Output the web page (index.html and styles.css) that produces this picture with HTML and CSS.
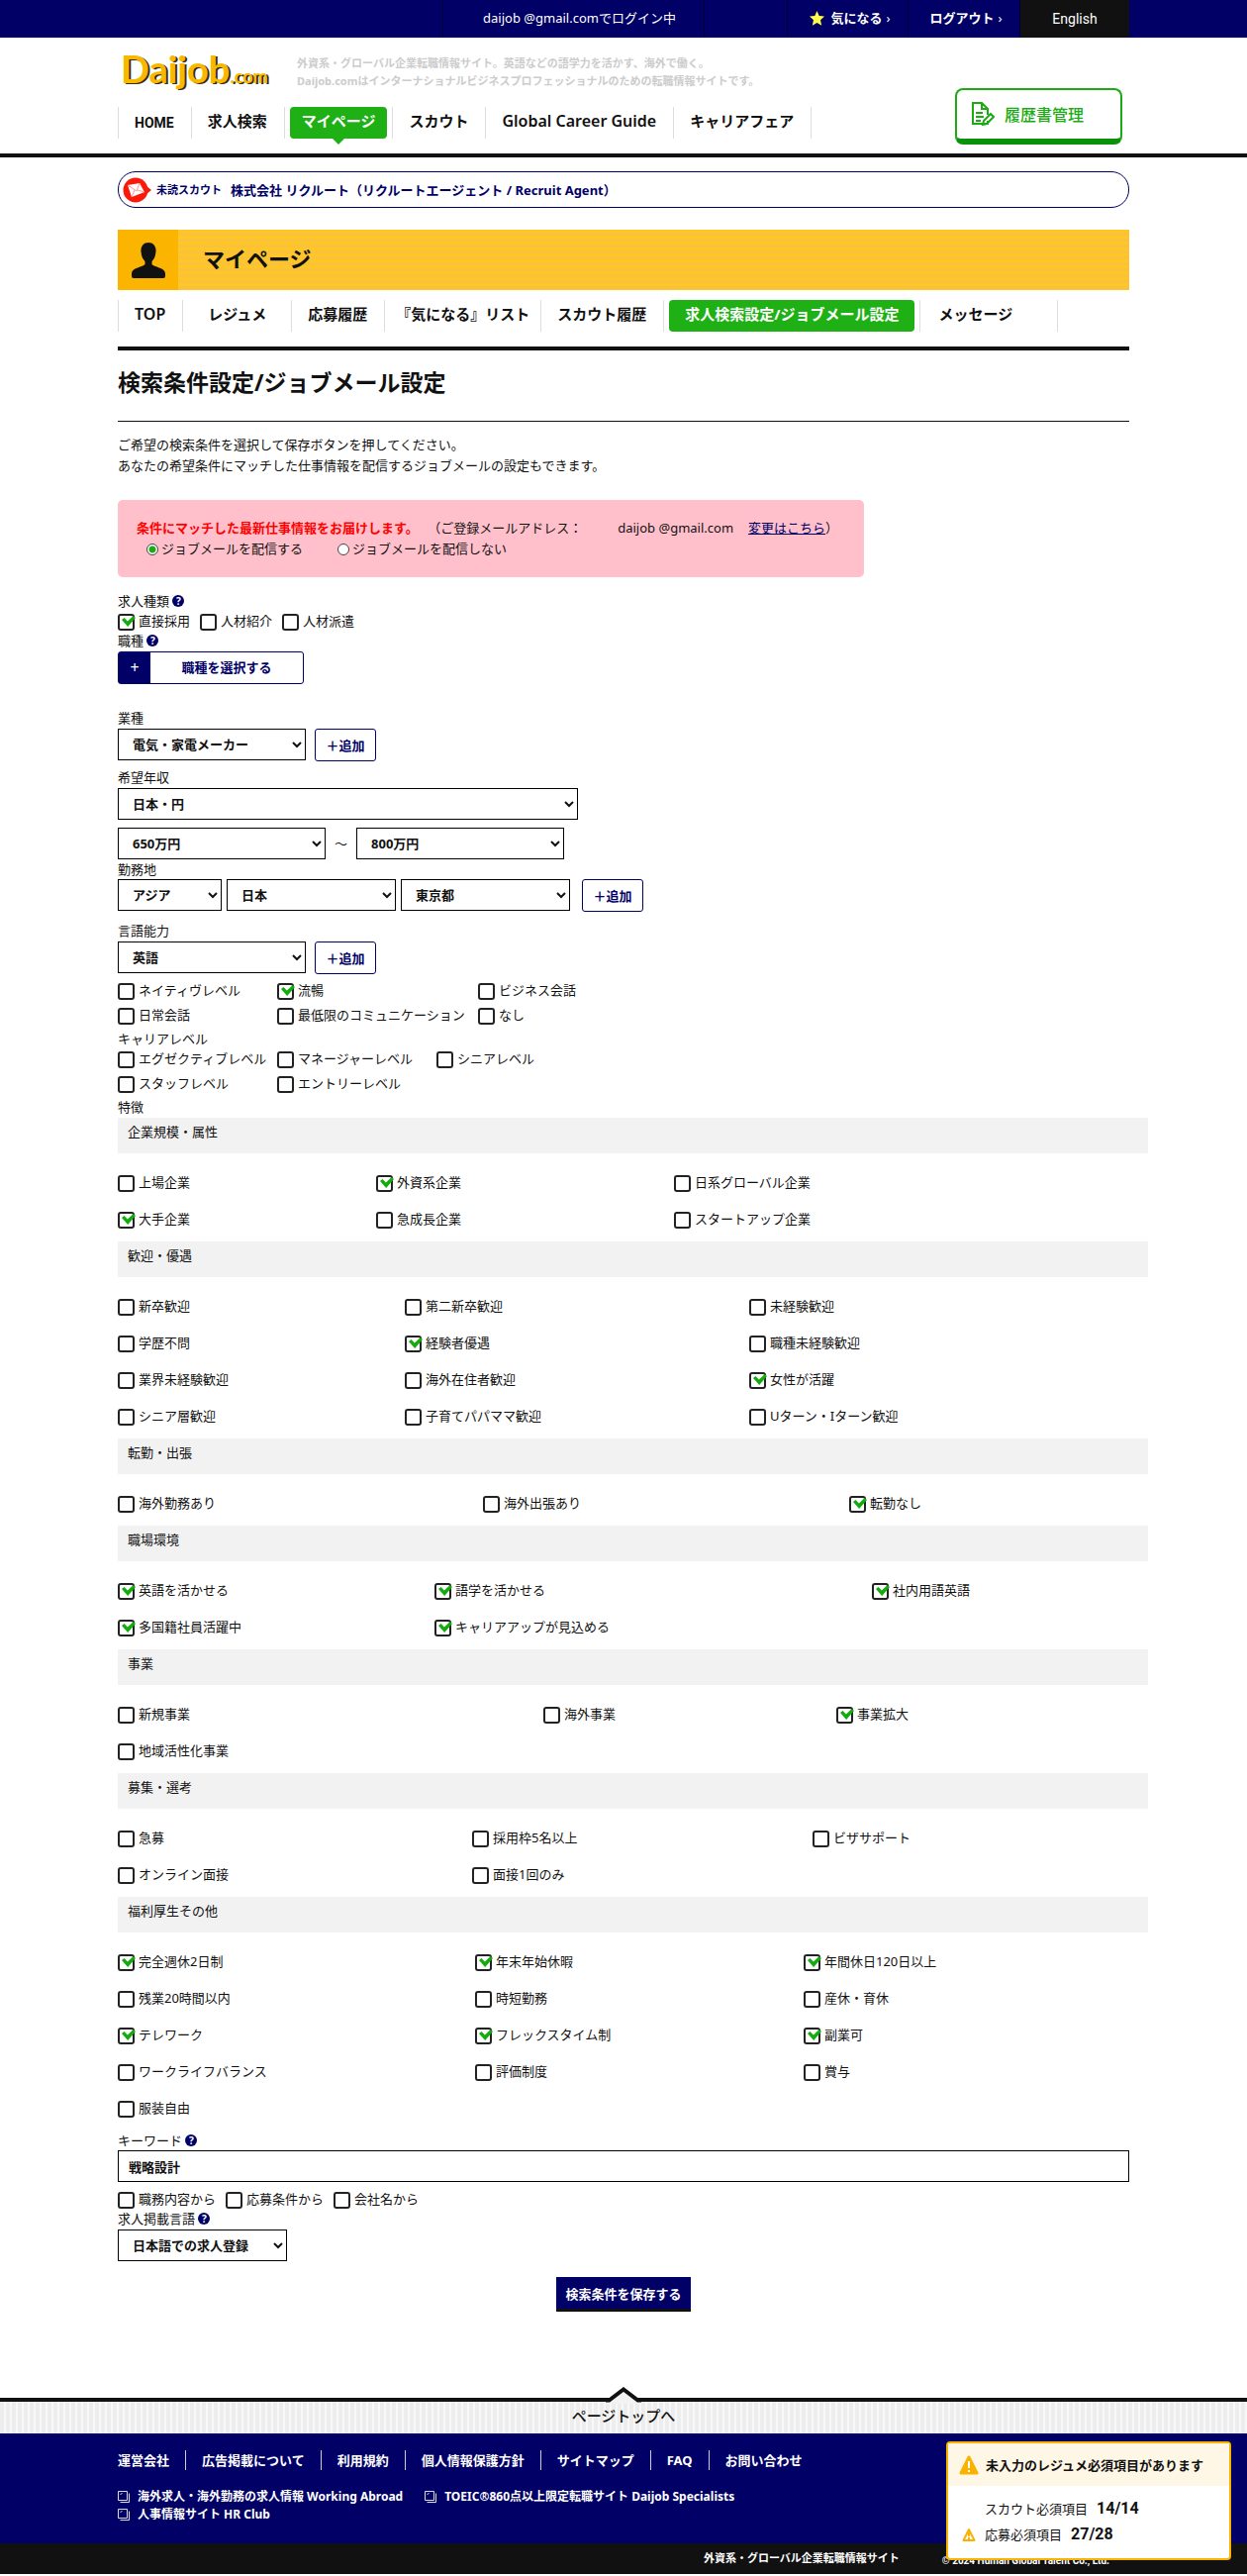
FILE: index.html
```html
<!DOCTYPE html>
<html lang="ja">
  <head>
    <meta charset="UTF-8" />
    <meta name="viewport" content="width=device-width, initial-scale=1.0" />
    <title>検索条件設定/ジョブメール設定 - Daijob.com</title>
    <link rel="stylesheet" href="styles.css">
  </head>
  <body>
    <div class="topbar">
      <ul class="container topbar-list">
        <li class="login">daijob @gmail.comでログイン中</li>
        <li class="blank"></li>
        <li class="fav">
          <a href="#">
            <svg width="15" height="15" viewBox="0 0 15 15"><path fill="#ffff4d" d="M7.5 0l2.2 5 5.3.6-4 3.6 1.2 5.5-4.7-2.8-4.7 2.8L4 9.200 0 5.600 5.300 5z" /></svg>
            気になる<span class="arrow">›</span>
          </a>
        </li>
        <li class="logout"><a href="#">ログアウト<span class="arrow">›</span></a></li>
        <li class="lang"><a href="#">English</a></li>
      </ul>
    </div>

    <header class="header">
      <div class="container header-inner">
        <div>
          <div class="brand">
            <a href="#" class="logo">Daijob<small>.com</small></a>
            <p class="tagline">外資系・グローバル企業転職情報サイト。英語などの語学力を活かす、海外で働く。<br>Daijob.comはインターナショナルビジネスプロフェッショナルのための転職情報サイトです。</p>
          </div>
          <nav>
            <ul class="nav">
              <li class="home"><a href="#">HOME</a></li>
              <li><a href="#">求人検索</a></li>
              <li class="current"><a href="#">マイページ</a></li>
              <li><a href="#">スカウト</a></li>
              <li class="latin"><a href="#">Global Career Guide</a></li>
              <li><a href="#">キャリアフェア</a></li>
            </ul>
          </nav>
        </div>
        <a href="#" class="resume-btn">
          <svg width="23" height="25" viewBox="0 0 23 25" fill="none" stroke="#1cab14" stroke-width="2">
            <path d="M16 19v3H1V1h9l6 6v6M10 1v6h6M4 11h7M4 15h8M4 19h5" />
            <path d="M11 23l1-4 7-7 3 3-7 7z" />
          </svg>
          履歴書管理
        </a>
      </div>
    </header>

    <main class="container main">
      <a href="#" class="scout">
        <svg width="29" height="26" viewBox="0 0 29 26">
          <circle cx="13" cy="13" r="12.500" fill="#f91a0c" />
          <path d="M24 9l5 4-5 4z" fill="#f91a0c" />
          <path d="M5 8l12-2 5 9-13 5z" fill="#fff" />
          <path d="M5 8l9 6 3-8M9 20l3-7M22 15l-7-2" fill="none" stroke="#f99" />
        </svg>
        <span class="scout-label">未読スカウト</span>
        <span>株式会社 リクルート（リクルートエージェント / Recruit Agent）</span>
      </a>

      <div class="page-title">
        <span class="page-icon">
          <svg width="34" height="36" viewBox="0 0 34 36" fill="#111"><path d="M17 0c5 0 8 4 7.500 9-.3 5-2 8-4 10v3c2 3 13 3 13.500 9v3q0 2-2 2H2q-2 0-2-2v-3c.5-6 11.500-6 13.500-9v-3c-2-2-3.700-5-4-10C9 4 12 0 17 0z" /></svg>
        </span>
        <p>マイページ</p>
      </div>

      <ul class="tabs">
        <li class="latin"><a href="#">TOP</a></li>
        <li class="wide"><a href="#">レジュメ</a></li>
        <li><a href="#">応募履歴</a></li>
        <li class="narrow"><a href="#">『気になる』リスト</a></li>
        <li><a href="#">スカウト履歴</a></li>
        <li class="current"><a href="#">求人検索設定/ジョブメール設定</a></li>
        <li class="last"><a href="#">メッセージ</a></li>
      </ul>

      <h1>検索条件設定/ジョブメール設定</h1>
      <p class="lead">ご希望の検索条件を選択して保存ボタンを押してください。<br>あなたの希望条件にマッチした仕事情報を配信するジョブメールの設定もできます。</p>

      <form>
        <div class="jobmail">
          <p><strong>条件にマッチした最新仕事情報をお届けします。</strong><span>（ご登録メールアドレス：</span><span class="mail">daijob @gmail.com</span><a href="#">変更はこちら</a>）</p>
          <div class="radios">
            <label><input type="radio" name="jobmail" checked>ジョブメールを配信する</label>
            <label><input type="radio" name="jobmail">ジョブメールを配信しない</label>
          </div>
        </div>

        <p class="label">求人種類 <span class="help">?</span></p>
        <div class="checks">
          <label><input type="checkbox" checked>直接採用</label>
          <label><input type="checkbox">人材紹介</label>
          <label><input type="checkbox">人材派遣</label>
        </div>

        <p class="label">職種 <span class="help">?</span></p>
        <button type="button" class="pick-btn"><span class="plus">+</span><span class="pick-text">職種を選択する</span></button>

        <label class="label" for="industry">業種</label>
        <div class="row">
          <select id="industry" class="w190"><option>電気・家電メーカー</option></select>
          <button type="button" class="add-btn">＋追加</button>
        </div>

        <label class="label" for="currency">希望年収</label>
        <div class="row">
          <select id="currency" class="w465"><option>日本・円</option></select>
        </div>
        <div class="row salary">
          <select class="w210" aria-label="希望年収 下限"><option>650万円</option></select>
          <span>～</span>
          <select class="w210" aria-label="希望年収 上限"><option>800万円</option></select>
        </div>

        <label class="label" for="area">勤務地</label>
        <div class="row area">
          <select id="area" class="w105"><option>アジア</option></select>
          <select class="w171" aria-label="国"><option>日本</option></select>
          <select class="w171" aria-label="都道府県"><option>東京都</option></select>
          <button type="button" class="add-btn">＋追加</button>
        </div>

        <label class="label" for="language">言語能力</label>
        <div class="row">
          <select id="language" class="w190"><option>英語</option></select>
          <button type="button" class="add-btn">＋追加</button>
        </div>
        <div class="levels language">
          <label><input type="checkbox">ネイティヴレベル</label>
          <label><input type="checkbox" checked>流暢</label>
          <label><input type="checkbox">ビジネス会話</label>
          <label><input type="checkbox">日常会話</label>
          <label><input type="checkbox">最低限のコミュニケーション</label>
          <label><input type="checkbox">なし</label>
        </div>

        <p class="label">キャリアレベル</p>
        <div class="levels career">
          <label><input type="checkbox">エグゼクティブレベル</label>
          <label><input type="checkbox">マネージャーレベル</label>
          <label><input type="checkbox">シニアレベル</label>
          <label><input type="checkbox">スタッフレベル</label>
          <label><input type="checkbox">エントリーレベル</label>
        </div>

        <p class="label">特徴</p>
        <div class="features">
          <h2>企業規模・属性</h2>
          <div class="feature-list company">
            <label><input type="checkbox">上場企業</label>
            <label><input type="checkbox" checked>外資系企業</label>
            <label><input type="checkbox">日系グローバル企業</label>
            <label><input type="checkbox" checked>大手企業</label>
            <label><input type="checkbox">急成長企業</label>
            <label><input type="checkbox">スタートアップ企業</label>
          </div>

          <h2>歓迎・優遇</h2>
          <div class="feature-list welcome">
            <label><input type="checkbox">新卒歓迎</label>
            <label><input type="checkbox">第二新卒歓迎</label>
            <label><input type="checkbox">未経験歓迎</label>
            <label><input type="checkbox">学歴不問</label>
            <label><input type="checkbox" checked>経験者優遇</label>
            <label><input type="checkbox">職種未経験歓迎</label>
            <label><input type="checkbox">業界未経験歓迎</label>
            <label><input type="checkbox">海外在住者歓迎</label>
            <label><input type="checkbox" checked>女性が活躍</label>
            <label><input type="checkbox">シニア層歓迎</label>
            <label><input type="checkbox">子育てパパママ歓迎</label>
            <label><input type="checkbox">Uターン・Iターン歓迎</label>
          </div>

          <h2>転勤・出張</h2>
          <div class="feature-list transfer">
            <label><input type="checkbox">海外勤務あり</label>
            <label><input type="checkbox">海外出張あり</label>
            <label><input type="checkbox" checked>転勤なし</label>
          </div>

          <h2>職場環境</h2>
          <div class="feature-list workplace">
            <label><input type="checkbox" checked>英語を活かせる</label>
            <label><input type="checkbox" checked>語学を活かせる</label>
            <label><input type="checkbox" checked>社内用語英語</label>
            <label><input type="checkbox" checked>多国籍社員活躍中</label>
            <label><input type="checkbox" checked>キャリアアップが見込める</label>
          </div>

          <h2>事業</h2>
          <div class="feature-list business">
            <label><input type="checkbox">新規事業</label>
            <label><input type="checkbox">海外事業</label>
            <label><input type="checkbox" checked>事業拡大</label>
            <label><input type="checkbox">地域活性化事業</label>
          </div>

          <h2>募集・選考</h2>
          <div class="feature-list recruit">
            <label><input type="checkbox">急募</label>
            <label><input type="checkbox">採用枠5名以上</label>
            <label><input type="checkbox">ビザサポート</label>
            <label><input type="checkbox">オンライン面接</label>
            <label><input type="checkbox">面接1回のみ</label>
          </div>

          <h2>福利厚生その他</h2>
          <div class="feature-list welfare">
            <label><input type="checkbox" checked>完全週休2日制</label>
            <label><input type="checkbox" checked>年末年始休暇</label>
            <label><input type="checkbox" checked>年間休日120日以上</label>
            <label><input type="checkbox">残業20時間以内</label>
            <label><input type="checkbox">時短勤務</label>
            <label><input type="checkbox">産休・育休</label>
            <label><input type="checkbox" checked>テレワーク</label>
            <label><input type="checkbox" checked>フレックスタイム制</label>
            <label><input type="checkbox" checked>副業可</label>
            <label><input type="checkbox">ワークライフバランス</label>
            <label><input type="checkbox">評価制度</label>
            <label><input type="checkbox">賞与</label>
            <label><input type="checkbox">服装自由</label>
          </div>
        </div>

        <label class="label" for="keyword">キーワード <span class="help">?</span></label>
        <input type="text" id="keyword" class="keyword" value="戦略設計">
        <div class="checks">
          <label><input type="checkbox">職務内容から</label>
          <label><input type="checkbox">応募条件から</label>
          <label><input type="checkbox">会社名から</label>
        </div>

        <label class="label" for="post-lang">求人掲載言語 <span class="help">?</span></label>
        <div class="row last-row">
          <select id="post-lang" class="w171"><option>日本語での求人登録</option></select>
        </div>

        <button type="submit" class="save-btn">検索条件を保存する</button>
      </form>
    </main>

    <footer>
      <a href="#" class="pagetop">
        <svg class="peak" width="36" height="17" viewBox="0 0 36 17"><path d="M0 17l4-2L18 3l14 12 4 2z" fill="#f3f3f3" /><path d="M0 13.500h3.500L18 2.500l14.500 11H36" fill="none" stroke="#111" stroke-width="4" /></svg>
        ページトップへ
      </a>
      <div class="footer-main">
        <div class="container">
          <ul class="footer-nav">
            <li><a href="#">運営会社</a></li>
            <li><a href="#">広告掲載について</a></li>
            <li><a href="#">利用規約</a></li>
            <li><a href="#">個人情報保護方針</a></li>
            <li><a href="#">サイトマップ</a></li>
            <li><a href="#">FAQ</a></li>
            <li><a href="#">お問い合わせ</a></li>
          </ul>
          <ul class="footer-sites">
            <li>
              <a href="#"><svg width="12" height="12" viewBox="0 0 12 12" fill="none" stroke="#dde"><path d="M.5.5h9v9h-9zM2.500 11.500h9v-9M2.500 4l2-2" /></svg>海外求人・海外勤務の求人情報 Working Abroad</a>
            </li>
            <li>
              <a href="#"><svg width="12" height="12" viewBox="0 0 12 12" fill="none" stroke="#dde"><path d="M.5.5h9v9h-9zM2.500 11.500h9v-9M2.500 4l2-2" /></svg>TOEIC®860点以上限定転職サイト Daijob Specialists</a>
            </li>
            <li>
              <a href="#"><svg width="12" height="12" viewBox="0 0 12 12" fill="none" stroke="#dde"><path d="M.5.5h9v9h-9zM2.500 11.500h9v-9M2.500 4l2-2" /></svg>人事情報サイト HR Club</a>
            </li>
          </ul>
        </div>
      </div>
      <div class="footer-bottom">
        <div class="container copyright">
          <span>外資系・グローバル企業転職情報サイト</span>
          <small>© 2024 Human Global Talent Co., Ltd.</small>
        </div>
      </div>
    </footer>

    <aside class="notice">
      <p class="notice-head">
        <svg width="20" height="20" viewBox="0 0 20 20"><path d="M10 2l8 16H2z" fill="#f9b200" stroke="#f9b200" stroke-width="3" stroke-linejoin="round" /><path d="M10 6v7M10 15v2" stroke="#fff" stroke-width="2" /></svg>
        未入力のレジュメ必須項目があります
      </p>
      <ul>
        <li><span>スカウト必須項目</span><b>14/14</b></li>
        <li>
          <svg width="14" height="14" viewBox="0 0 14 14" fill="none" stroke="#f9b200" stroke-width="2"><path d="M7 2l5.500 11h-11z" stroke-linejoin="round" /><path d="M7 5v4M7 10v2" /></svg>
          <span>応募必須項目</span><b>27/28</b>
        </li>
      </ul>
    </aside>
  </body>
</html>
```
FILE: styles.css
```css
* {
  box-sizing: border-box;
}
body {
  margin: 0;
  font-family: "Noto Sans", "Noto Sans CJK JP", sans-serif;
  font-size: 13px;
  line-height: 20px;
  color: #111;
  background: #fff;
}
ul,
p,
h1,
h2 {
  margin: 0;
  padding: 0;
  list-style: none;
}
a {
  color: inherit;
  text-decoration: none;
}
svg {
  flex: none;
}
.container {
  max-width: 1022px;
  margin: 0 auto;
}

/* top bar */
.topbar {
  background: #006;
  color: #fff;
}
.topbar-list {
  display: flex;
  justify-content: flex-end;
  height: 38px;
  line-height: 36px;
}
.topbar-list li {
  border-left: 1px solid #003;
  text-align: center;
}
.topbar-list .login {
  width: 264px;
  padding-left: 12px;
}
.topbar-list .blank {
  width: 84px;
}
.topbar-list .fav {
  width: 122px;
  padding-left: 5px;
  font-weight: bold;
}
.topbar-list .logout {
  width: 113px;
  padding-left: 4px;
  font-weight: bold;
}
.topbar-list .lang {
  width: 111px;
  background: #111;
  font-family: Roboto, sans-serif;
  font-size: 14px;
  line-height: 38px;
}
.topbar-list a {
  display: flex;
  justify-content: center;
  align-items: center;
}
.fav svg {
  margin-right: 6px;
}
.arrow {
  margin-left: 4px;
  font-weight: normal;
}

/* header */
.header {
  border-bottom: 4px solid #111;
}
.header-inner {
  display: flex;
  justify-content: space-between;
  align-items: flex-end;
}
.brand {
  display: flex;
  align-items: center;
  height: 42px;
  margin: 14px 0;
}
.logo {
  width: 181px;
  padding-left: 3px;
  font-family: Lato, sans-serif;
  font-size: 38px;
  line-height: 38px;
  font-weight: bold;
  color: #f9b800;
  text-shadow: 2px 1px 0 #3a2c08;
}
.logo small {
  font-size: 18px;
}
.tagline {
  font-size: 11px;
  line-height: 18px;
  font-weight: bold;
  color: #ccc;
}
.nav,
.tabs {
  display: flex;
  font-size: 15px;
  line-height: 29px;
  font-weight: bold;
}
.nav {
  margin-bottom: 15px;
}
.nav li,
.tabs li {
  padding: 0 17px 0 16px;
  border-left: 1px solid #ddd;
}
.nav li:last-child,
.tabs li:last-child {
  border-right: 1px solid #ddd;
}
.nav a,
.tabs a {
  display: block;
  padding-bottom: 3px;
}
.nav .home {
  font-family: Roboto, sans-serif;
  font-size: 14px;
  line-height: 32px;
}
.nav .home a {
  padding: 0;
}
.nav .latin,
.tabs .latin {
  font-size: 16px;
  font-weight: 600;
}
.nav .current,
.tabs .current {
  padding: 0 5px;
}
.nav .current a,
.tabs .current a {
  position: relative;
  padding: 0 12px 3px;
  border-radius: 4px;
  background: #1fb016;
  color: #fff;
}
.nav .current a::after {
  content: "";
  position: absolute;
  top: 100%;
  left: 50%;
  margin-left: -6px;
  border: 6px solid transparent;
  border-top-color: #1fb016;
  border-bottom: 0;
}
.resume-btn {
  display: flex;
  align-items: center;
  gap: 10px;
  width: 169px;
  height: 57px;
  margin: 0 7px 9px 0;
  padding-left: 15px;
  border: 2px solid #1cab14;
  border-bottom: 6px solid #0a930a;
  border-radius: 8px;
  font-size: 16px;
  font-weight: 500;
  color: #1cab14;
}

/* my page */
.main {
  padding-top: 14px;
}
.scout {
  display: flex;
  align-items: center;
  height: 37px;
  padding-left: 4px;
  border: 1px solid #006;
  border-radius: 18px;
  font-weight: bold;
  color: #006;
}
.scout-label {
  margin: 0 9px 0 5px;
  font-size: 11px;
}
.page-title {
  display: flex;
  align-items: center;
  height: 61px;
  margin-top: 22px;
  background: repeating-linear-gradient(#ffc624 0 3px, #f8c23c 3px 6px);
  font-size: 22px;
  font-weight: bold;
}
.page-title p {
  padding-bottom: 4px;
}
.page-icon {
  display: flex;
  justify-content: center;
  align-items: center;
  width: 61px;
  height: 61px;
  margin-right: 25px;
  background: #fbb500;
}
.tabs {
  margin-top: 10px;
  padding-bottom: 15px;
  border-bottom: 4px solid #111;
}
.tabs .wide {
  padding: 0 25px;
}
.tabs .narrow {
  padding: 0 11px;
}
.tabs .current a {
  padding: 0 16px 3px;
}
.tabs .last {
  padding: 0 45px 0 18px;
}
h1 {
  padding: 14px 0 21px;
  border-bottom: 1px solid #111;
  font-size: 23px;
  line-height: 36px;
}
.lead {
  margin: 13px 0 24px;
  line-height: 21px;
}

/* form */
.jobmail {
  max-width: 754px;
  margin-bottom: 14px;
  padding: 18px 19px;
  border-radius: 5px;
  background: #ffc0cb;
  line-height: 21px;
}
.jobmail strong {
  margin-right: 16px;
  color: #f00;
}
.jobmail .mail {
  margin: 0 15px 0 36px;
}
.jobmail a {
  color: #006;
  text-decoration: underline;
}
.radios {
  display: flex;
  gap: 35px;
  padding-left: 10px;
}
.radios label {
  display: flex;
  align-items: center;
  gap: 3px;
}
.radios input {
  appearance: none;
  width: 12px;
  height: 12px;
  margin: 0;
  border: 1px solid #444;
  border-radius: 50%;
  background: #fff;
}
.radios input:checked {
  background: radial-gradient(#1cab14 0 3px, #fff 4px);
}
.label {
  display: block;
}
.help {
  display: inline-block;
  width: 12px;
  height: 12px;
  border-radius: 50%;
  background: #006;
  color: #fff;
  font-size: 10px;
  line-height: 12px;
  font-weight: bold;
  text-align: center;
  vertical-align: 1px;
}
.checks {
  display: flex;
  gap: 10px;
}
.checks label,
.levels label,
.feature-list label {
  display: flex;
  align-items: flex-start;
  gap: 4px;
  white-space: nowrap;
}
input[type="checkbox"] {
  appearance: none;
  flex: none;
  position: relative;
  width: 17px;
  height: 17px;
  margin: 3px 0 0;
  border: 2px solid #222;
  border-radius: 3px;
  background: #fff;
}
input[type="checkbox"]:checked::after {
  content: "";
  position: absolute;
  top: 0;
  left: 2px;
  width: 14px;
  height: 11px;
  background: #14ac0c;
  clip-path: polygon(0 36%, 18% 18%, 42% 50%, 84% 0, 100% 18%, 44% 100%);
}
button {
  font-family: inherit;
  font-size: 13px;
  font-weight: bold;
  cursor: pointer;
}
.pick-btn {
  display: flex;
  width: 188px;
  height: 33px;
  margin: 1px 0 24px;
  padding: 0;
  border: 1px solid #006;
  border-radius: 3px;
  background: #fff;
  color: #006;
  line-height: 30px;
}
.pick-btn .plus {
  width: 32px;
  background: #006;
  color: #fff;
  font-weight: normal;
  font-size: 16px;
}
.pick-text {
  flex: 1;
}
.row {
  display: flex;
  gap: 9px;
  margin: 1px 0 6px;
}
select {
  height: 32px;
  padding: 0 3px 0 10px;
  border: 1px solid #000;
  border-radius: 0;
  background: #fff;
  color: #111;
  font-family: inherit;
  font-size: 13px;
  font-weight: bold;
}
.w105 {
  width: 105px;
}
.w171 {
  width: 171px;
}
.w190 {
  width: 190px;
}
.w210 {
  width: 210px;
}
.w465 {
  width: 465px;
}
.add-btn {
  width: 62px;
  height: 33px;
  padding: 0;
  border: 1px solid #006;
  border-radius: 3px;
  background: #fff;
  color: #006;
}
.salary {
  align-items: center;
  margin: 8px 0 0;
}
.area {
  gap: 5px;
  margin: 0 0 9px;
}
.area .add-btn {
  margin-left: 7px;
}
.levels {
  display: grid;
  row-gap: 5px;
  margin-bottom: 4px;
}
.language {
  grid-template-columns: 161px 203px 1fr;
}
.career {
  grid-template-columns: 161px 161px 1fr;
}
.features {
  margin: 1px -19px 5px 0;
}
.features h2 {
  height: 36px;
  padding: 4px 10px;
  background: #f2f2f2;
  font-size: 13px;
  line-height: 20px;
  font-weight: normal;
}
.feature-list {
  display: grid;
  grid-auto-rows: 37px;
  padding: 10px 0 5px;
}
.feature-list:last-child {
  padding-bottom: 0;
}
.feature-list label {
  padding-top: 9px;
}
.company {
  grid-template-columns: 261fr 301fr 479fr;
}
.welcome {
  grid-template-columns: 290fr 348fr 403fr;
}
.transfer {
  grid-template-columns: 369fr 370fr 302fr;
}
.workplace {
  grid-template-columns: 320fr 442fr 279fr;
}
.business {
  grid-template-columns: 430fr 296fr 315fr;
}
.recruit {
  grid-template-columns: 358fr 344fr 339fr;
}
.welfare {
  grid-template-columns: 361fr 332fr 348fr;
}
.keyword {
  display: block;
  width: 100%;
  height: 32px;
  margin: 0 0 7px;
  padding: 0 10px;
  border: 1px solid #000;
  font-family: inherit;
  font-size: 13px;
  font-weight: bold;
  color: #111;
}
.last-row {
  margin-bottom: 16px;
}
.save-btn {
  display: block;
  height: 35px;
  margin: 0 auto;
  padding: 0 9px;
  border: 0;
  border-bottom: 3px solid #111;
  background: #006;
  color: #fff;
}

/* footer */
footer {
  margin-top: 87px;
}
.pagetop {
  display: block;
  position: relative;
  height: 36px;
  border-top: 4px solid #111;
  background: repeating-linear-gradient(90deg, #ededed 0 4px, #f8f8f8 4px 6px);
  font-size: 15px;
  line-height: 28px;
  font-weight: 500;
  text-align: center;
}
.peak {
  position: absolute;
  top: -15px;
  left: 50%;
  margin-left: -18px;
}
.footer-main {
  padding: 17px 0 20px;
  background: #006;
  color: #fff;
  font-weight: bold;
}
.footer-nav {
  display: flex;
}
.footer-nav li + li {
  margin-left: 16px;
  padding-left: 16px;
  border-left: 1px solid #ccd;
}
.footer-sites {
  display: flex;
  flex-wrap: wrap;
  column-gap: 22px;
  max-width: 700px;
  margin-top: 18px;
  font-size: 12px;
  line-height: 18px;
}
.footer-sites a {
  display: flex;
  align-items: center;
  gap: 8px;
}
.footer-bottom {
  height: 31px;
  background: #111;
  color: #fff;
  font-size: 11px;
  line-height: 29px;
  font-weight: bold;
}
.copyright {
  display: flex;
  justify-content: flex-end;
  gap: 43px;
  padding-right: 20px;
}
.copyright small {
  font-family: Roboto, sans-serif;
  font-size: 10px;
  line-height: 36px;
}

/* floating notice */
.notice {
  position: fixed;
  right: 16px;
  bottom: 16px;
  width: 288px;
  height: 120px;
  border: 2px solid #f9b200;
  border-radius: 4px;
  background: #fff;
}
.notice-head {
  display: flex;
  align-items: center;
  gap: 7px;
  height: 43px;
  padding-left: 11px;
  background: #fff7e5;
  font-weight: bold;
}
.notice ul {
  padding: 10px 14px;
}
.notice li {
  display: flex;
  align-items: center;
  gap: 9px;
  height: 26px;
}
.notice li:first-child {
  padding-left: 23px;
}
.notice b {
  font-family: Roboto, sans-serif;
  font-size: 16px;
}
```
